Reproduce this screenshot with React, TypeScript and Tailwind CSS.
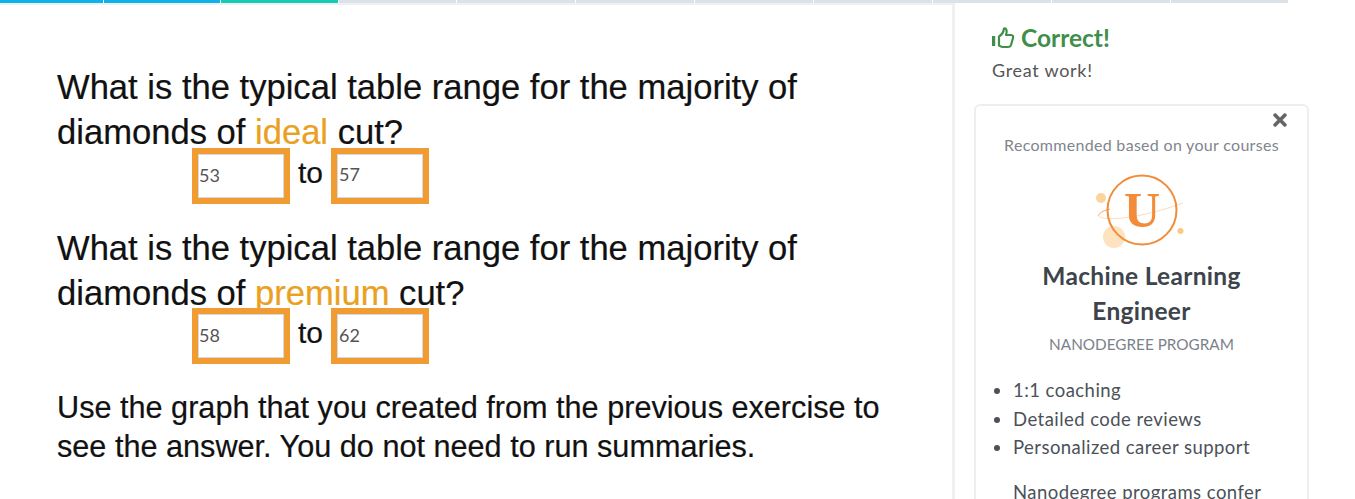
import { FaTimes } from "react-icons/fa";

const SEGMENTS = [
  { w: "w-[103px]", c: "bg-[#0fb2e6]" },
  { w: "w-[116px]", c: "bg-[#0fb2e6]" },
  { w: "w-[117px]", c: "bg-[#14ccb4]" },
  { w: "w-[117px]", c: "bg-[#dbe2e8]" },
  { w: "w-[118px]", c: "bg-[#dbe2e8]" },
  { w: "w-[118px]", c: "bg-[#dbe2e8]" },
  { w: "w-[118px]", c: "bg-[#dbe2e8]" },
  { w: "w-[118px]", c: "bg-[#dbe2e8]" },
  { w: "w-[118px]", c: "bg-[#dbe2e8]" },
  { w: "w-[118px]", c: "bg-[#dbe2e8]" },
  { w: "w-[117px]", c: "bg-[#dbe2e8]" },
];

function Box({ value, raised, inset }: { value: string; raised?: boolean; inset?: boolean }) {
  return (
    <div className="w-[98px] h-[56px] border-[6px] border-[#f09c33] bg-white">
      <div className={`h-full border border-[#d5dae2] flex items-center text-[18px] text-[#555] font-['Lato',sans-serif] ${raised ? "pb-[4px]" : "pb-[2px]"} ${inset ? "pl-[1px]" : ""}`}>
        {value}
      </div>
    </div>
  );
}

function Range({ low, high, raised }: { low: string; high: string; raised?: boolean }) {
  return (
    <div className="flex items-center pl-[192px] h-[56px]">
      <Box value={low} />
      <span className="w-[41px] text-center text-[30px] pb-[8px] text-[#111] [-webkit-text-stroke:0.2px_#111]">to</span>
      <Box value={high} raised={raised} inset />
    </div>
  );
}

function Logo() {
  return (
    <svg width="100" height="80" viewBox="0 0 100 80" className="mx-auto">
      <circle cx="9" cy="28" r="5" fill="#fbd49b" />
      <circle cx="22" cy="67" r="11" fill="#fde3bf" />
      <circle cx="88.500" cy="61" r="3" fill="#fbc883" />
      <path d="M6.500 46 C 7 42 14 40 18 39" fill="none" stroke="#f6a868" strokeWidth="1" />
      <path d="M6.500 46 C 12 52 50 48 91 33" fill="none" stroke="#fbdcc0" strokeWidth="1" />
      <circle cx="50" cy="40" r="34.500" fill="none" stroke="#f28c38" strokeWidth="2" />
      <text x="50" y="57" textAnchor="middle" fontSize="50" fontWeight="700" fontFamily="Liberation Serif" fill="#f28c38">U</text>
    </svg>
  );
}

export default function App() {
  return (
    <div className="h-[499px] w-[1355px] overflow-hidden bg-white flex flex-col">
      <div className="flex gap-[1px] h-[3px] shrink-0">
        {SEGMENTS.map((s, i) => (
          <div key={i} className={`${s.w} ${s.c}`} />
        ))}
      </div>
      <div className="flex flex-1 min-h-0">
        <div className="w-[955px] shrink-0 border-r-[3px] border-t-2 border-[#eef0f2] pl-[57px] pt-[60px] font-['Liberation_Sans',sans-serif] text-[#111] [-webkit-text-stroke:0.2px_#111]">
          <p className="text-[34.6px] leading-[45px] w-[800px]">
            What is the typical table range for the majority of diamonds of{" "}
            <span className="text-[#eaa020] [-webkit-text-stroke:0.2px_#eaa020]">ideal</span> cut?
          </p>
          <div className="-ml-[57px] -mt-[7px] [-webkit-text-stroke:0]">
            <Range low="53" high="57" raised />
          </div>
          <p className="text-[34.6px] leading-[45px] w-[800px] mt-[22px]">
            What is the typical table range for the majority of diamonds of{" "}
            <span className="text-[#eaa020] [-webkit-text-stroke:0.2px_#eaa020]">premium</span> cut?
          </p>
          <div className="-ml-[57px] -mt-[8px] [-webkit-text-stroke:0]">
            <Range low="58" high="62" />
          </div>
          <p className="text-[30.65px] leading-[39px] mt-[24px] w-[860px]">
            Use the graph that you created from the previous exercise to see the answer. You do not need to run summaries.
          </p>
        </div>
        <div className="flex-1 pl-[19px] font-['Lato',sans-serif]">
          <div className="pl-[18px] pt-[19px]">
            <div className="flex items-center gap-[5px] text-[#3f8f4a] text-[24.500px] font-bold leading-[32px]">
              <svg width="24" height="24" viewBox="0 0 24 24" fill="none" stroke="currentColor" strokeWidth="2.2" strokeLinejoin="round">
                <path d="M1.500 10v10" strokeWidth="3.400" />
                <path d="M7 10.500c2.500-1.500 4.500-4 5-8 2.500-.5 3.500 2.500 2 6.500h5c2 0 2.500 1.500 2 3l-2 7c-.5 1.500-1.500 2-3 2h-5c-2 0-3-1-4-1.500z" />
              </svg>
              Correct!
            </div>
            <div className="mt-[5px] text-[18px] leading-[22px] text-[#555] tracking-[0.7px]">Great work!</div>
          </div>
          <div className="relative mt-[23px] w-[335px] rounded-[6px] border-2 border-[#eceef1] px-[15px] pt-[28px]">
            <FaTimes className="absolute right-[17px] top-[4px] text-[#666] text-[20px]" />
            <div className="text-center text-[16px] leading-[22px] text-[#7f868e] tracking-[0.3px]">Recommended based on your courses</div>
            <div className="mt-[14px]">
              <Logo />
            </div>
            <div className="mt-[8px] text-center text-[24.500px] leading-[35px] font-bold text-[#3d444c] px-[30px] tracking-[0.3px]">
              Machine Learning Engineer
            </div>
            <div className="mt-[5px] text-center text-[15.300px] leading-[22px] text-[#7b8289]">NANODEGREE PROGRAM</div>
            <ul className="mt-[21px] list-disc pl-[22px] text-[18.500px] leading-[28.500px] text-[#4b5158] tracking-[0.45px]">
              <li>1:1 coaching</li>
              <li>Detailed code reviews</li>
              <li>Personalized career support</li>
            </ul>
            <p className="mt-[16px] pl-[22px] text-[18.500px] leading-[28px] text-[#4b5158] tracking-[0.45px]">Nanodegree programs confer</p>
          </div>
        </div>
      </div>
    </div>
  );
}
